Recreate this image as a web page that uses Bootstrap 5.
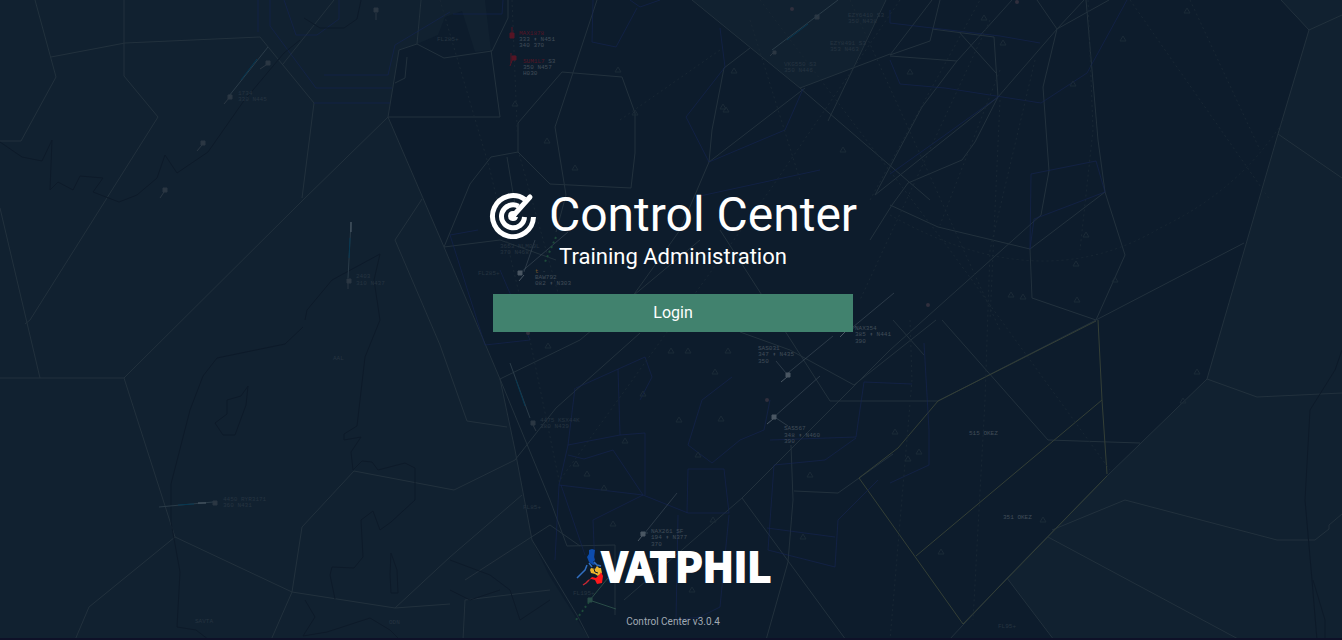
<!DOCTYPE html>
<html lang="en">
<head>
<meta charset="utf-8">
<meta name="viewport" content="width=device-width, initial-scale=1">
<title>Control Center</title>
<link href="https://cdn.jsdelivr.net/npm/bootstrap@5.3.0/dist/css/bootstrap.min.css" rel="stylesheet">
<style>
body{font-family:Roboto,sans-serif;background:#0d1c2c;color:#fff}
.radar{position:absolute;inset:0;width:100%;height:100%;z-index:0}
.radar text{font:6px "Liberation Mono",monospace;fill:#414d59}
.radar .dim text{fill:#263441}
.front{z-index:1}
.screen{border-bottom:2px solid #0e1128}
.brand-icon{width:48px;height:48px;margin-right:12px}
.title{font-size:48px;line-height:58px;font-weight:400}
.subtitle{font-size:22px;line-height:26px;font-weight:400}
.login-box{width:360px;max-width:100%;padding-bottom:28px}
.btn-login{--bs-btn-bg:#41826e;--bs-btn-color:#fff;--bs-btn-border-color:#41826e;--bs-btn-hover-bg:#376f5e;--bs-btn-hover-color:#fff;--bs-btn-hover-border-color:#376f5e;border-radius:0;height:38px}
.partner{width:196px;height:44px;overflow:visible}
.partner text{font:700 41px "Noto Sans CJK JP","Liberation Sans",sans-serif;fill:#fff;stroke:#fff;stroke-width:2}
.version{font-size:10px;line-height:16px;color:#a0aab4}
</style>
</head>
<body>
<div class="screen position-relative min-vh-100 d-flex flex-column overflow-hidden">
<svg class="radar" viewBox="0 0 1342 640" preserveAspectRatio="xMidYMin slice" aria-hidden="true">
<g fill="#112130">
<path d="M0 0H421L417 44L399 50L388 117L444 247L500 379L515 450L532 540L549 575L590 640H0Z"/>
<path d="M421 0H485L491 50L475 52L462 11L445 17L438 35L417 44Z"/>
<path d="M692 0L800 88L853 68L886 0Z"/>
<path d="M1281 0L1309 30L1278 134L1224 320L1207 379L1107 476L1007 578L1054 640H1342V0Z"/>
</g>
<g fill="none" stroke="#22313d" stroke-width="1">
<path d="M35 0L56 77L21 141H0M51 57L125 43L260 37L314 103L302 198M124 0V76L158 117L30 320L25 324M0 208L40 378M334 0L283 64M0 378H124L302 201L388 117L444 247L500 379L515 450L532 540L577 615L590 640M124 378L175 537L292 592L395 608L450 604M175 537L89 607L75 640M292 592L302 527L354 471L454 490L515 460L556 408L640 333M292 592L271 640M395 608L450 557L522 495"/>
<path d="M421 0L417 44L399 50L388 117H500L491 50M417 44L444 58L492 51L508 18V0M407 57L405 78L395 83M422 199L395 240L440 345L467 421L507 427M597 0L555 127L566 195L556 232M562 72L622 77L635 113V153L631 188L550 184L518 152L491 157L470 184L444 247L500 240L556 260M562 72L518 123V152M507 157L515 205"/>
<path d="M500 379L580 340L700 240M500 379L550 500L567 546L615 545V615"/>
<path d="M692 0L800 88L930 200M800 88L890 54M886 0L828 121M805 88L709 162L680 230L630 300M709 162L712 130L724 68L750 48M932 0L890 55L930 41L940 0M890 56L957 61L1012 0M932 29L994 37L998 97L975 142L962 160L908 183L892 205L870 240M957 61L922 107L875 195M959 32L996 73M1037 0L1057 29L1084 0M1057 29L1043 87L1049 171L1041 215L890 350L742 498L624 600M1109 0L1057 29L998 97L875 195M1086 0L1098 140L1105 192L1125 255L1096 320M890 205L938 227L1030 249L1105 192M1030 249L1032 298L1096 320L1244 243M720 230L830 401M830 401H938L1096 320M740 332L790 350L854 385M854 385L936 320M924 355L893 320"/>
<path d="M942 320L1048 440L1140 443M742 498L846 640M791 445L793 500L788 562L766 640M794 491L838 493L893 454M1281 0L1309 30L1278 134L1224 320L1207 379L1107 476L1007 578L949 640M1309 30L1342 15M1278 134L1342 178M1207 379L1257 397L1342 393M1052 530L1125 500L1277 540H1315L1320 536L1329 529V525L1342 514M1048 537L1240 640M1007 578L1054 640M463 640L465 600L550 590M465 580L550 525L580 546"/>
</g>
<g fill="none" stroke="#343f36"><path d="M1098 320L1102 400L1107 474M1096 321L938 401L898 448L859 478L963 624L1107 476M1102 400L916 556"/></g>
<g fill="none" stroke="#152554" opacity=".6">
<path d="M258 0V32M270 0V26L316 88H392M314 103H390M284 0L296 35H317L339 19V0M324 75H388L395 45L450 12M593 0L592 42L616 47L637 8M453 14H502L503 0M630 0L640 7L660 0M720 28L725 67L686 117L709 162L785 130L803 89M890 10V23L1000 36L1040 43M890 60L900 84L945 88L1041 103L1087 73L1127 0M998 97L938 140L890 174M1030 249L1031 174L1096 161L1105 192L1034 219L1030 249"/>
<path d="M500 270L530 340L485 345L450 235L478 230M576 388L645 357L652 377L640 400M618 369L620 435L568 445L575 388M568 445L559 485L643 495L613 450L584 459L568 455M643 495L688 513H729L724 469H688L687 513M643 495L593 520L595 570M620 435L645 433V495M732 377L702 400L688 445L712 463L740 440L764 430L770 400M864 382L912 384M864 382L856 437L770 440M924 343L929 430V465L890 483M774 465L768 550L835 567L838 520L878 480M767 528L835 537M774 465L825 460L856 438M559 485L555 560M678 515L676 620L700 617L720 607L729 515M561 485L585 555M700 196L820 170"/>
</g>
<g fill="none" stroke="#182734" stroke-dasharray="2 3">
<path d="M512 0L518 150L560 300M440 0L490 170L530 340L560 485M900 0L770 190L560 480M990 20L860 300M1035 60L990 250L985 400L973 620M1000 100L990 320M850 0L1000 330M750 20L800 180M760 0L950 250L1110 470M1130 0L1270 200M1190 0L1260 150M890 215Q1040 300 1160 228Q1240 190 1284 120M1088 0L1093 130L1080 250M870 200L980 0M1000 70L940 225M620 120L720 50M910 320L912 380L890 640"/>
</g>
<g fill="none" stroke="#0d1a29">
<path d="M0 142L22 157L42 161L52 140L50 190L58 182L73 190L80 176L103 178L93 192L119 202L137 195L157 178L165 155L177 173L208 152L243 102L263 78L284 53L300 40M304 18L320 28H344L357 19L361 0M305 320L307 310L332 280L380 254L374 280L380 320L365 357L357 426L344 434V440L361 437L351 452L353 470M303 327L285 344L217 358L203 376L190 410L171 484V522L180 572L177 627L196 630L209 640M227 400L241 396L248 386L246 405L235 435H223L215 423L227 414ZM353 470L362 461L372 462L378 470L405 463L415 468V500L391 522L380 530L373 511L361 520L363 557L354 568L332 567L330 575L335 599M391 553L397 570L398 593H391L390 574Z"/>
<path d="M1342 350L1335 370L1310 410L1305 500L1312 580L1317 640M1313 580L1325 620V640M450 560L490 575L510 590L520 620L550 600M450 590L470 600L500 590M305 600L315 617L303 636L327 632L370 618L390 630L400 640"/>
</g>
<g fill="none" stroke="#1b2a37">
<path d="M512 106l3-5 3 5zM544 143l3-5 3 5zM572 170l3-5 3 5zM632 115l3-5 3 5zM615 72l3-5 3 5zM720 109l3-5 3 5zM723 112l3-5 3 5zM731 73l3-5 3 5zM840 152l3-5 3 5zM907 74l3-5 3 5zM981 20l3-5 3 5zM1000 45l3-5 3 5zM1120 41l3-5 3 5zM1184 13l3-5 3 5zM1070 86l3-5 3 5zM1083 237l3-5 3 5zM1073 266l3-5 3 5zM1112 282l3-5 3 5zM1008 297l3-5 3 5zM1020 299l3-5 3 5zM1074 302l3-5 3 5zM545 348l3-5 3 5zM668 353l3-5 3 5zM685 353l3-5 3 5zM725 353l3-5 3 5zM712 374l3-5 3 5zM640 396l3-5 3 5zM676 422l3-5 3 5zM718 421l3-5 3 5zM695 457l3-5 3 5zM622 443l3-5 3 5zM573 466l3-5 3 5zM584 476l3-5 3 5zM601 490l3-5 3 5zM610 526l3-5 3 5zM710 522l3-5 3 5zM807 477l3-5 3 5zM800 539l3-5 3 5zM1194 374l3-5 3 5zM1180 403l3-5 3 5zM1040 522l3-5 3 5zM938 554l3-5 3 5zM905 461l3-5 3 5zM916 454l3-5 3 5zM892 434l3-5 3 5zM689 592l3-5 3 5z"/>
</g>
<g fill="#2b3743" stroke="#2b3743">
<path d="M374 8h4v4h-4zM376 13v7M266 61h4v4h-4zM266 65l-6 4M228 95h4v4h-4zM229 98l-5 6M201 141h4v4h-4zM202 145l-5 6M163 188h4v4h-4zM164 192l-4 6M347 279h4v4h-4zM348 283v6M213 501h4v4h-4zM531 421h4v4h-4zM533 425l3 6M815 15h4v4h-4zM773 51h3v3h-3zM770 56l5-5"/>
</g>
<g fill="#4a5763" stroke="#4a5763">
<path d="M518 271h4v4h-4zM524 275l-5 6M786 373h4v4h-4zM787 377l-6 5M772 415h4v4h-4zM773 419l-6 5M641 532h4v4h-4zM642 536l-4 5M845 332l-5 5"/>
<path d="M788 373L833 336M774 417L820 376M644 534L677 493M847 332L894 293M520 273L568 232M524 272L535 240M640 533h8M851 330l5-4M776 418l12 8M786 373l-10-12" stroke-opacity=".5"/>
</g>
<path d="M229 96L268 47M348 278L351 222M159 507L213 502M530 418L510 363M772 50L838 0" fill="none" stroke="#2b3c49"/>
<path d="M241 80L257 59M349 258L350 238M178 505L194 504M525 406L516 380M787 40L808 24" stroke="#063852"/>
<path d="M351 222v10M198 503h8" stroke="#53616c"/>
<path d="M556 237L545 262M589 602L576 620" stroke="#1d4a3a" stroke-width="2" stroke-dasharray="2 3"/>
<path d="M588 598h4v4h-4zM590 600L608 578M592 601l24 8" fill="#294c47" stroke="#294c47"/>
<path d="M510 33h4v5h-4zM512 27v10M511 53v10M512 56h4v4h-4zM513 58l-3 8" fill="#561425" stroke="#561425"/>
<g>
<text x="519" y="35" style="fill:#561425">MAX1878</text><text x="519" y="41">333 ↟ N451</text><text x="519" y="47">340 370</text>
<text x="523" y="63"><tspan fill="#561425">SUM1L7</tspan> S3</text><text x="523" y="69">350 N457</text><text x="523" y="75">H030</text>
<text x="535" y="273"><tspan fill="#73552a">t</tspan> -</text><text x="535" y="279">BAW792</text><text x="535" y="285">082 ↟ N303</text>
<text x="758" y="350">SAS031</text><text x="758" y="356">347 ↟ N435</text><text x="758" y="363">350</text>
<text x="855" y="330">NAX354</text><text x="855" y="336">385 ↟ N441</text><text x="855" y="343">390</text>
<text x="784" y="430">SAS567</text><text x="784" y="437">348 ↟ N460</text><text x="784" y="443">390</text>
<text x="651" y="533">NAX261 SF</text><text x="651" y="539">194 ↟ N377</text><text x="651" y="546">370</text>
<text x="969" y="435">515 OKEZ</text><text x="1003" y="519">351 OKEZ</text>
</g>
<g class="dim">
<text x="238" y="95">1734</text><text x="238" y="101">330 N445</text><text x="356" y="278">2403</text><text x="356" y="285">310 N437</text>
<text x="437" y="41">FL285+</text><text x="848" y="17">EZY6410 S3</text><text x="848" y="23">350 N438</text><text x="830" y="45">EZY8491 S3</text><text x="830" y="51">353 N463</text><text x="784" y="66">VKG550 S3</text><text x="784" y="72">350 N446</text>
<text x="500" y="248">3653 NLM09L</text><text x="500" y="254">370 N468</text><text x="478" y="275">FL285+</text>
<text x="540" y="422">4475 KSX44K</text><text x="540" y="428">380 N439</text><text x="223" y="501">4450 RYR3171</text><text x="223" y="507">360 N431</text>
<text x="333" y="360">AAL</text><text x="195" y="623">SAVTA</text><text x="389" y="624">ODN</text><text x="523" y="509">FL85+</text><text x="573" y="595">FL195+</text><text x="998" y="628">FL95+</text>
</g>
<g fill="#302f3d"><circle cx="792" cy="9" r="2"/><circle cx="1017" cy="2" r="2"/><circle cx="928" cy="305" r="2"/><circle cx="767" cy="400" r="2"/><circle cx="528" cy="333" r="2"/></g>
</svg>

<main class="front position-relative flex-grow-1 d-flex flex-column align-items-center justify-content-center ps-1">
<div class="login-box d-flex flex-column align-items-center">
<h1 class="title d-flex align-items-center text-nowrap mb-0">
<svg class="brand-icon flex-shrink-0" viewBox="0 0 48 48" fill="none" stroke="#fff" stroke-width="5" aria-hidden="true">
<path d="M36 8.500A20.500 20.500 0 1 0 44.500 26" />
<path d="M29.500 15.200A11.500 11.500 0 1 0 35.500 26"/>
<path d="M24 25L41 6" stroke-linecap="round"/>
<path d="M24 20A5 5 0 1 0 29 26H27L29 20Z" fill="#fff" stroke="none"/>
</svg>
<span>Control Center</span>
</h1>
<p class="subtitle mb-4">Training Administration</p>
<button type="button" class="btn btn-login w-100">Login</button>
</div>
</main>

<footer class="front position-relative d-flex flex-column align-items-center pb-2 ps-1">
<svg class="partner mb-4" viewBox="0 0 196 44" role="img" aria-label="VATPHIL">
<path d="M14 4l3-1 3 1-1 7 1 3-2 2 3 2-3 1-4-3-2-5 2-3z" fill="#0d4cad"/>
<path d="M12 19l-2 5-3 3-5 5" stroke="#326fc0" stroke-width="1.500" fill="none"/>
<path d="M14 17l3 4M19 16l3 3 4 1" stroke="#326fc0" stroke-width="1.500" fill="none"/>
<path d="M16 22l4 1 2-3 2 2h2l1 5-4 3-3-2-4-1-1-3z" fill="#edb52d"/><path d="M19 23l1 3 3 1" stroke="#0d1b2a" fill="none"/>
<path d="M26 26l2 4-1 7-5 1-2-4-4-1-3 2 4-4 4 1 4-4z" fill="#ff181b"/>
<path d="M14 34l-3 3-3 2" stroke="#c92832" stroke-width="1.500" fill="none"/>
<text x="27" y="36">VATPHIL</text>
</svg>
<div class="version">Control Center v3.0.4</div>
</footer>
</div>
<script src="https://cdn.jsdelivr.net/npm/bootstrap@5.3.0/dist/js/bootstrap.bundle.min.js"></script>
</body>
</html>
